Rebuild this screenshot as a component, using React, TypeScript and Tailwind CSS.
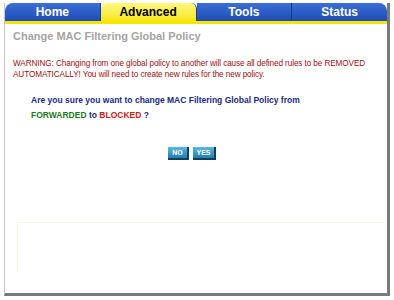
import React from 'react';

const tabs = [
  { label: 'Home', active: false },
  { label: 'Advanced', active: true },
  { label: 'Tools', active: false },
  { label: 'Status', active: false },
];

export default function App() {
  return (
    <div className="w-[394px] h-[300px] bg-white pt-[3px] pl-[4px] pr-[4px] pb-[4px]" style={{ fontFamily: '"Liberation Sans", Arial, sans-serif' }}>
      <div className="flex flex-col h-full border-l border-[#c8c8c8] border-r-[3px] border-r-[#7a7a7a] border-b-[3px] border-b-[#7a7a7a]">
        {/* Tab bar */}
        <div className="flex h-[18px]">
          {tabs.map((t, i) => (
            <div
              key={t.label}
              className={`flex-1 flex items-center justify-center text-[12px] font-bold border-r border-[#1a3a8a] ${
                t.active
                  ? 'bg-gradient-to-b from-[#fff87a] to-[#f5e600] text-black rounded-t-[6px]'
                  : 'bg-gradient-to-b from-[#3a6fd8] to-[#1f4cb4] text-white'
              } ${i === 0 ? 'rounded-tl-[8px]' : ''} ${i === tabs.length - 1 ? 'rounded-tr-[8px] border-r-0' : ''}`}
            >
              {t.label}
            </div>
          ))}
        </div>
        <div className="h-[3px] bg-[#f5e600]" />

        {/* Content */}
        <div className="flex-1 flex flex-col px-[8px]">
          <div className="mt-[4px] text-[11px] text-[#a4a4a4] font-semibold">Change MAC Filtering Global Policy</div>
          <div className="mt-[13px] text-[8.2px] leading-[11px] text-[#a01010] tracking-[-0.1px]">
            WARNING: Changing from one global policy to another will cause all defined rules to be REMOVED AUTOMATICALLY! You will need to create new rules for the new policy.
          </div>
          <div className="mt-[13px] pl-[18px] text-[8.5px] leading-[15px] font-bold text-[#1a2a80]">
            <div>Are you sure you want to change MAC Filtering Global Policy from</div>
            <div>
              <span className="text-[#1c7a1c]">FORWARDED</span> to <span className="text-[#d01818]">BLOCKED</span> ?
            </div>
          </div>
          <div className="mt-[24px] flex justify-center gap-[4px] pr-[8px]">
            <button className="h-[13px] w-[21px] text-[7px] font-bold text-white bg-gradient-to-b from-[#5ab8e0] to-[#1e7fb0] border-r-2 border-b-2 border-[#0d3e5a] leading-none">NO</button>
            <button className="h-[13px] w-[23px] text-[7px] font-bold text-white bg-gradient-to-b from-[#5ab8e0] to-[#1e7fb0] border-r-2 border-b-2 border-[#0d3e5a] leading-none">YES</button>
          </div>
          <div className="mt-[62px] ml-[4px] mr-[-6px] h-[50px] border-t border-l border-[#fbf6e6]" />
        </div>
      </div>
    </div>
  );
}
